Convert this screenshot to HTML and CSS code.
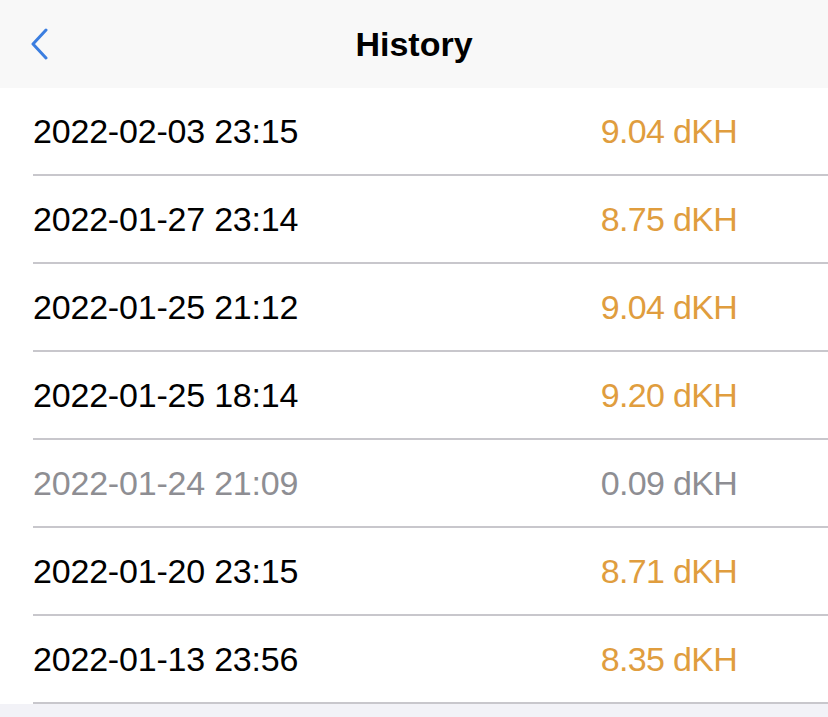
FILE: index.html
```html
<!DOCTYPE html>
<html lang="en">
<head>
    <meta charset="UTF-8">
    <meta name="viewport" content="width=device-width, initial-scale=1.0">
    <title>History</title>
    <link rel="stylesheet" href="styles.css">
</head>
<body>
    <div class="nav-bar">
        <button class="back-button" aria-label="Back">
            <svg width="20" height="32" viewBox="0 0 20 32">
                <path d="M16 2 L3 16 L16 30" fill="none" stroke="#3b7ee0" stroke-width="3" stroke-linecap="round" stroke-linejoin="round"/>
            </svg>
        </button>
        <h1>History</h1>
    </div>
    <ul class="history-list">
        <li class="history-row"><span class="date">2022-02-03 23:15</span><span class="value">9.04 dKH</span></li>
        <li class="history-row"><span class="date">2022-01-27 23:14</span><span class="value">8.75 dKH</span></li>
        <li class="history-row"><span class="date">2022-01-25 21:12</span><span class="value">9.04 dKH</span></li>
        <li class="history-row"><span class="date">2022-01-25 18:14</span><span class="value">9.20 dKH</span></li>
        <li class="history-row ignored"><span class="date">2022-01-24 21:09</span><span class="value">0.09 dKH</span></li>
        <li class="history-row"><span class="date">2022-01-20 23:15</span><span class="value">8.71 dKH</span></li>
        <li class="history-row"><span class="date">2022-01-13 23:56</span><span class="value">8.35 dKH</span></li>
    </ul>
</body>
</html>
```

FILE: styles.css
```css
body {
    margin: 0;
    font-family: "Liberation Sans", Arial, sans-serif;
    background-color: #f2f2f7;
    height: 717px;
    overflow: hidden;
}
.nav-bar {
    position: relative;
    height: 88px;
    background-color: #f8f8f8;
    display: flex;
    align-items: center;
    justify-content: center;
}
.nav-bar h1 {
    margin: 0;
    font-size: 34px;
    font-weight: bold;
    color: #000;
}
.back-button {
    position: absolute;
    left: 30px;
    top: 28px;
    padding: 0;
    border: none;
    background: none;
    display: flex;
}
.history-list {
    list-style: none;
    margin: 0;
    padding: 0 0 0 33px;
    background: white;
}
.history-row {
    height: 86px;
    display: flex;
    align-items: center;
    justify-content: space-between;
    padding-right: 91px;
    border-bottom: 2px solid #c8c7cc;
    font-size: 34px;
    color: #000;
}
.history-row .date {
    letter-spacing: -0.2px;
}
.history-row .value {
    color: #e09d3e;
    letter-spacing: -0.7px;
}
.history-row.ignored .date,
.history-row.ignored .value {
    color: #8e8e93;
}
```
